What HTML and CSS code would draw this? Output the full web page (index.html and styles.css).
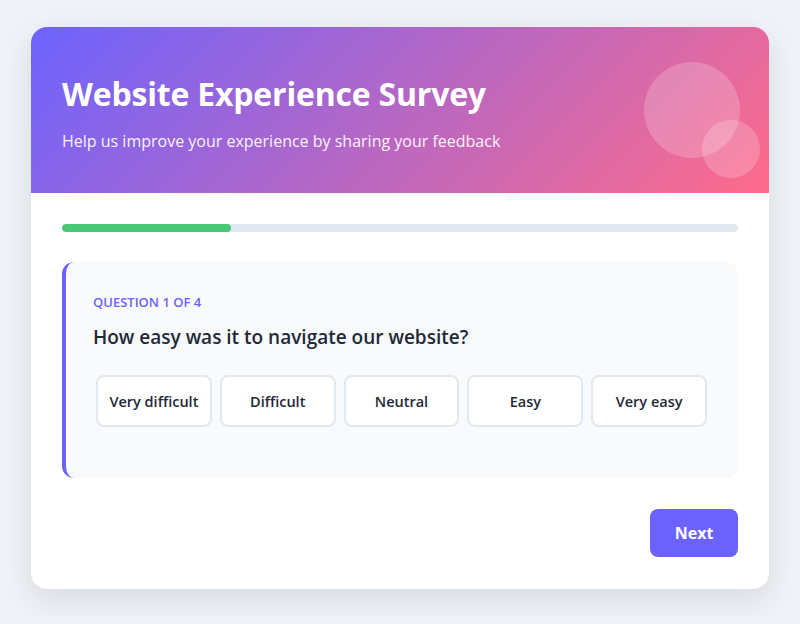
FILE: index.html
```html
<!DOCTYPE html>
<html lang="en">
<head>
    <meta charset="UTF-8">
    <meta name="viewport" content="width=device-width, initial-scale=1.0">
    <title>Website Experience Survey</title>
    <link rel="stylesheet" href="styles.css">
</head>
<body>
    <main class="card">
        <header class="hero">
            <h1>Website Experience Survey</h1>
            <p>Help us improve your experience by sharing your feedback</p>
            <span class="bubble big"></span>
            <span class="bubble small"></span>
        </header>
        <div class="content">
            <div class="progress"><div class="progress-fill" style="width: 25%"></div></div>
            <section class="question">
                <div class="q-label">Question 1 of 4</div>
                <h2>How easy was it to navigate our website?</h2>
                <div class="options">
                    <button class="opt">Very difficult</button>
                    <button class="opt">Difficult</button>
                    <button class="opt">Neutral</button>
                    <button class="opt">Easy</button>
                    <button class="opt">Very easy</button>
                </div>
            </section>
            <div class="actions">
                <button class="next">Next</button>
            </div>
        </div>
    </main>
</body>
</html>
```

FILE: styles.css
```css
:root {
    --purple: #6c63ff;
    --pink: #ff6b8a;
    --text: #1f2937;
}

* {
    box-sizing: border-box;
}

body {
    margin: 0;
    padding: 27px 31px;
    background-color: #eff3f7;
    font-family: "Open Sans", "Noto Sans", sans-serif;
    color: var(--text);
}

.card {
    background: #fff;
    border-radius: 16px;
    overflow: hidden;
    box-shadow: 0 10px 30px rgba(30, 41, 59, 0.12);
}

.hero {
    position: relative;
    height: 166px;
    padding: 45px 31px 0;
    background: linear-gradient(135deg, #6c63ff 0%, #ff6b8a 100%);
    color: #fff;
    overflow: hidden;
}

.hero h1 {
    margin: 0;
    font-size: 32px;
    font-weight: 700;
    line-height: 44px;
    letter-spacing: -0.2px;
}

.hero p {
    margin: 14px 0 0;
    font-size: 16px;
    opacity: 0.92;
}

.bubble {
    position: absolute;
    border-radius: 50%;
    background: rgba(255, 255, 255, 0.2);
}

.bubble.big {
    width: 96px;
    height: 96px;
    left: 613px;
    top: 35px;
}

.bubble.small {
    width: 58px;
    height: 58px;
    left: 671px;
    top: 93px;
}

.content {
    padding: 31px 31px 32px;
}

.progress {
    height: 8px;
    background: #e2e8f0;
    border-radius: 4px;
    overflow: hidden;
}

.progress-fill {
    height: 100%;
    background: #48c774;
    border-radius: 4px;
}

.question {
    margin-top: 30px;
    background: #f8fafc;
    border-left: 4px solid var(--purple);
    border-radius: 12px;
    padding: 31px 28px 51px 27px;
}

.q-label {
    color: var(--purple);
    font-size: 13px;
    font-weight: 600;
    text-transform: uppercase;
    line-height: 18px;
}

.question h2 {
    margin: 13px 0 0;
    font-size: 19px;
    font-weight: 600;
    line-height: 26px;
}

.options {
    display: grid;
    grid-template-columns: repeat(5, 1fr);
    gap: 8px;
    margin: 25px 3px 0;
}

.opt {
    height: 52px;
    padding: 0;
    background: #fff;
    border: 2px solid #e2e8f0;
    border-radius: 8px;
    font-family: inherit;
    font-size: 14.5px;
    font-weight: 600;
    color: var(--text);
    cursor: pointer;
}

.actions {
    display: flex;
    justify-content: flex-end;
    margin-top: 31px;
}

.next {
    width: 88px;
    height: 48px;
    background: var(--purple);
    border: none;
    border-radius: 8px;
    color: #fff;
    font-family: inherit;
    font-size: 16px;
    font-weight: 700;
    cursor: pointer;
}
```
